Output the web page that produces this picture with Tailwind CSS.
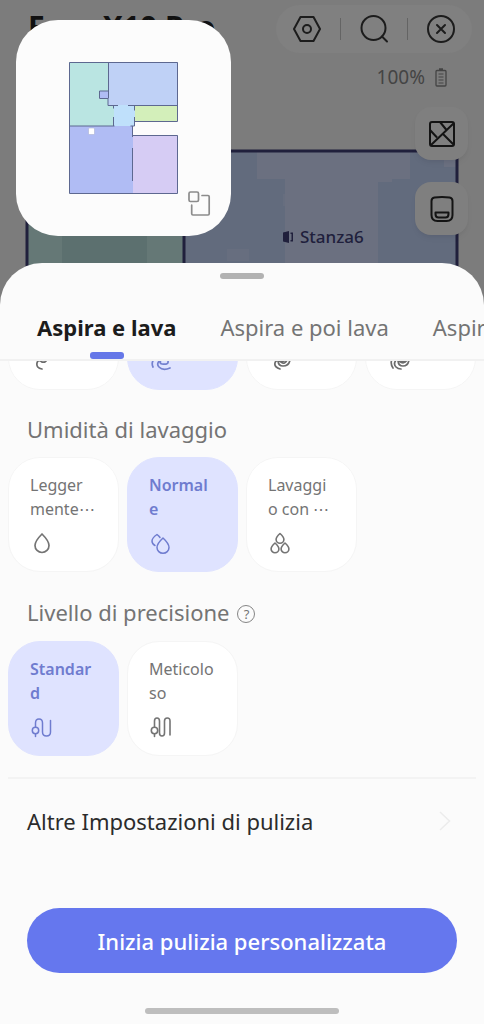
<!DOCTYPE html>
<html lang="it">
<head>
    <meta charset="UTF-8">
    <meta name="viewport" content="width=device-width, initial-scale=1.0">
    <title>Pulizia personalizzata</title>
    <script src="https://cdn.jsdelivr.net/npm/@tailwindcss/browser@4"></script>
</head>
<body class="bg-[#7c7c7c] font-['Noto_Sans',sans-serif]">
    <div class="relative min-h-screen flex flex-col overflow-hidden">

        <!-- Map behind the sheet -->
        <svg class="absolute left-0 top-0 w-full h-[310px]" viewBox="0 0 484 310" preserveAspectRatio="none" aria-hidden="true">
            <path fill="#657876" d="M27 151h156v159H27z"/>
            <path fill="#5c706f" d="M62 236h85v74H62z"/>
            <path fill="#6b7080" d="M183 151h274v159H183z"/>
            <path fill="#626b7d" d="M183 151h74v28h28v131H183zM410 151h34v16h13v143h-79V182h14v-3h18z"/>
            <path fill="#6b7080" opacity=".6" d="M227 249h22v12h-22zM283 194h5v12h-5z"/>
            <path fill="none" stroke="#20203c" stroke-width="3" d="M27 310V151h430v159M184 151v159"/>
        </svg>

        <header class="relative h-[263px] shrink-0">
            <div class="flex items-start justify-between pl-7 pr-3 pt-[5px]">
                <h1 class="whitespace-nowrap text-[30px] leading-[44px] font-bold text-[#111]">Easy X10 Pro</h1>
                <div class="flex items-center h-12 px-4 gap-[18px] rounded-full bg-[#808080] text-[#1c1c1c]">
                    <button type="button" aria-label="Impostazioni">
                        <svg class="w-[30px] h-[30px]" viewBox="0 0 30 30" fill="none" stroke="currentColor" stroke-width="2" stroke-linejoin="round">
                            <path d="M8.500 3h13L28 15l-6.500 12h-13L2 15z"/>
                            <circle cx="15" cy="15" r="4"/>
                        </svg>
                    </button>
                    <span class="w-px h-[22px] bg-[#646464]"></span>
                    <button type="button" aria-label="Cerca">
                        <svg class="w-[30px] h-[30px]" viewBox="0 0 30 30" fill="none" stroke="currentColor" stroke-width="2" stroke-linecap="round">
                            <circle cx="14.500" cy="14" r="12"/>
                            <path d="M23 22.500l5 5"/>
                        </svg>
                    </button>
                    <span class="w-px h-[22px] bg-[#646464]"></span>
                    <button type="button" aria-label="Chiudi">
                        <svg class="w-[30px] h-[30px]" viewBox="0 0 30 30" fill="none" stroke="currentColor" stroke-width="2" stroke-linecap="round">
                            <circle cx="15" cy="15" r="13"/>
                            <path d="M11 11l8 8M19 11l-8 8"/>
                        </svg>
                    </button>
                </div>
            </div>

            <div class="flex items-center justify-end gap-[10px] pt-[10px] pr-[37px] text-[#444]">
                <span class="text-[19px] leading-7">100%</span>
                <svg class="w-3 h-[19px]" viewBox="0 0 12 19" fill="none" stroke="currentColor">
                    <path stroke-width="1.300" d="M2 2.500h8q1 0 1 1V17q0 1-1 1H2q-1 0-1-1V3.500q0-1 1-1zM4 1h4"/>
                    <path stroke-width="1.200" d="M3.500 6h5M3.500 9h5M3.500 12h5M3.500 15h5"/>
                </svg>
            </div>

            <div class="flex flex-col items-end gap-[22px] pt-4 pr-4 text-[#141414]">
                <button type="button" aria-label="Modifica mappa" class="flex items-center justify-center w-[53px] h-[53px] rounded-2xl bg-[#7f7f7f] shadow-md shadow-black/5">
                    <svg class="w-[26px] h-[26px]" viewBox="0 0 26 26" fill="none" stroke="currentColor" stroke-width="2" stroke-linejoin="round">
                        <rect x="1" y="1" width="24" height="24" rx="2"/>
                        <path d="M25 2L2 24M1 9l7 7.500M11 1l6.500 8M14 13l11 11"/>
                    </svg>
                </button>
                <button type="button" aria-label="Stazione" class="flex items-center justify-center w-[53px] h-[53px] rounded-2xl bg-[#7f7f7f] shadow-md shadow-black/5">
                    <svg class="w-6 h-[26px]" viewBox="0 0 24 26" fill="none" stroke="currentColor" stroke-width="2" stroke-linejoin="round">
                        <path d="M4.500 1.500Q12 .5 19.500 1.500 22.500 2 22.500 5v14q0 6-6 6h-9q-6 0-6-6V5q0-3 3-3.500z"/>
                        <path d="M5.500 16.500h13v1.500q0 3.500-3 3.500h-7q-3 0-3-3.500z"/>
                    </svg>
                </button>
            </div>

            <!-- Room label on the map -->
            <div class="absolute left-[282px] top-[225px] flex items-center gap-[6px] text-[#20203c]">
                <svg class="w-3 h-3" viewBox="0 0 12 12" fill="currentColor">
                    <path d="M1 1.500L7 0v12l-6-1.500zM8.500 1.500H11v9H8.500V9h1V3h-1z"/>
                </svg>
                <span class="text-[17px] leading-6 font-medium">Stanza6</span>
            </div>

            <!-- Floating mini map -->
            <div class="absolute left-4 top-5 w-[215px] h-[216px] rounded-[42px] bg-[#fcfcfc]">
                <svg class="w-full h-full" viewBox="16 20 215 216" fill="none" aria-label="Mappa">
                    <path fill="#bae5e2" d="M69 62h39v29h-9v8h9v6h6v21H69z"/>
                    <path fill="#bfd1f6" d="M109 62h69v43h-70V91h1z"/>
                    <path fill="#bfe0fb" d="M114 105h21v21h-21z"/>
                    <path fill="#d3efba" d="M135 105h43v16h-43z"/>
                    <path fill="#b0bcf4" d="M69 126h64v67H69zM100 91h8v7h-8z"/>
                    <path fill="#d6ccf4" d="M133 135h45v58h-45z"/>
                    <path stroke="#5d6890" d="M69.500 62.500h108v59h-43M69.500 62.500v131h108v-58h-45M108.500 62.500V91h-9v7.500h8.500v7h10M128 105.500h49.500M108.500 91v7.500M113.500 105.500v3M113.500 117v9M69.500 126h45M134.500 105.500v5M134.500 117v9h-4M132.500 126v11M132.500 148v33"/>
                    <rect x="88.500" y="128" width="6" height="6.500" rx="1" fill="#fff" stroke="#a3a9c8" stroke-width=".5"/>
                    <g stroke="#8c8c8c" stroke-width="1.700" stroke-linejoin="round" stroke-linecap="round">
                        <rect x="189" y="192" width="9.500" height="9.500" rx="1.500"/>
                        <path d="M202 195.500h6q1.200 0 1.200 1.200v17q0 1.300-1.200 1.300h-15q-1.300 0-1.300-1.300v-8.500"/>
                    </g>
                </svg>
            </div>
        </header>

        <!-- Settings sheet -->
        <main class="relative flex-1 flex flex-col rounded-t-[42px] bg-[#fbfbfb] overflow-hidden">
            <div class="mx-auto mt-[10px] w-11 h-[6px] shrink-0 rounded-full bg-[#b2b2b2]"></div>

            <nav class="flex shrink-0 gap-11 pl-[37px] mt-[31px] border-b-2 border-[#f1f1f1] whitespace-nowrap text-[22px] leading-[34px] text-[#747474]">
                <button type="button" class="flex flex-col items-center font-bold text-[#1c1c1c]">
                    Aspira e lava
                    <span class="mt-2 w-[34px] h-[7px] rounded-[3px] bg-[#6577e8]"></span>
                </button>
                <button type="button" class="self-start">Aspira e poi lava</button>
                <button type="button" class="self-start">Aspira</button>
            </nav>

            <form class="flex-1 flex flex-col">
                <!-- Suction power, scrolled mostly out of view -->
                <div class="h-[29px] shrink-0 overflow-hidden flex flex-col justify-end px-2">
                    <div class="grid grid-cols-4 gap-2">
                        <label class="flex flex-col justify-end h-[115px] pl-[21px] pb-[17px] rounded-[32px] border border-[#f5f5f5] bg-white text-[#6c6c6c]">
                            <input type="radio" name="suction" aria-label="Silenziosa" class="sr-only">
                            <svg class="w-6 h-6" viewBox="0 0 24 24" fill="none" stroke="currentColor" stroke-width="1.700" stroke-linecap="round">
                                <path d="M17 11q-1 4-5 3M12 14q-4-3-5 1-1 5 5 6"/>
                            </svg>
                        </label>
                        <label class="flex flex-col justify-end h-[115px] pl-[21px] pb-[17px] rounded-[32px] border border-[#dfe3ff] bg-[#dfe3ff] text-[#7481cf]">
                            <input type="radio" name="suction" aria-label="Normale" class="sr-only" checked>
                            <svg class="w-6 h-6" viewBox="0 0 24 24" fill="none" stroke="currentColor" stroke-width="1.700" stroke-linecap="round">
                                <path d="M5 11q-3 4-1 8M11 12q-4 4-1 7 4 4 11 1M11 13q7-3 8 0 1 4-6 3-2 0-2-3M19 13l1-3"/>
                            </svg>
                        </label>
                        <label class="flex flex-col justify-end h-[115px] pl-[21px] pb-[17px] rounded-[32px] border border-[#f5f5f5] bg-white text-[#6c6c6c]">
                            <input type="radio" name="suction" aria-label="Forte" class="sr-only">
                            <svg class="w-6 h-6" viewBox="0 0 24 24" fill="none" stroke="currentColor" stroke-width="1.700" stroke-linecap="round">
                                <path d="M2 11l1 1M13 14q-5-3-6 1-1 4 5 6M10 12q0 6 5 6 6 0 7-6M11 12q5 3 7-1M13 14q4 3 6-2"/>
                            </svg>
                        </label>
                        <label class="flex flex-col justify-end h-[115px] pl-[21px] pb-[17px] rounded-[32px] border border-[#f5f5f5] bg-white text-[#6c6c6c]">
                            <input type="radio" name="suction" aria-label="Massima" class="sr-only">
                            <svg class="w-6 h-6" viewBox="0 0 24 24" fill="none" stroke="currentColor" stroke-width="1.700" stroke-linecap="round">
                                <path d="M5 11q-2 5 1 9M9 12q-3 4 0 7 2 2 5 2M11 12q0 6 5 6 5 0 6-6M11 12q5 4 8-1M12 13q5 4 8-1"/>
                            </svg>
                        </label>
                    </div>
                </div>

                <fieldset>
                    <legend class="px-[27px] pt-[25px] pb-[14px] text-[22px] leading-7 text-[#747474]">Umidità di lavaggio</legend>
                    <div class="grid grid-cols-4 gap-2 px-2 text-[16px] leading-6">
                        <label class="flex flex-col justify-between h-[115px] pl-[21px] pt-[15px] pb-4 rounded-[32px] border border-[#f5f5f5] bg-white text-[#747474]">
                            <input type="radio" name="water" class="sr-only">
                            <span>Legger<br>mente⋯</span>
                            <svg class="w-6 h-6" viewBox="0 0 24 24" fill="none" stroke="currentColor" stroke-width="1.700" stroke-linejoin="round">
                                <path d="M12 3q7 7 7 11.500a7 7 0 0 1-14 0Q5 10 12 3z"/>
                            </svg>
                        </label>
                        <label class="flex flex-col justify-between h-[115px] pl-[21px] pt-[15px] pb-4 rounded-[32px] border border-[#dfe3ff] bg-[#dfe3ff] text-[#6f7ccf]">
                            <input type="radio" name="water" class="sr-only" checked>
                            <span class="font-semibold">Normal<br>e</span>
                            <svg class="w-6 h-6" viewBox="0 0 24 24" fill="none" stroke="currentColor" stroke-width="1.500" stroke-linejoin="round" stroke-linecap="round">
                                <path d="M14 7Q20 12.500 20 16.500a6 5.800 0 0 1-12 0Q8 12.500 14 7z"/>
                                <path d="M6 14.500Q3 13 3 10q0-3 5-6.500 2 1.500 3 3"/>
                            </svg>
                        </label>
                        <label class="flex flex-col justify-between h-[115px] pl-[21px] pt-[15px] pb-4 rounded-[32px] border border-[#f5f5f5] bg-white text-[#747474]">
                            <input type="radio" name="water" class="sr-only">
                            <span>Lavaggi<br>o con ⋯</span>
                            <svg class="w-6 h-6" viewBox="0 0 24 24" fill="none" stroke="currentColor" stroke-width="1.600" stroke-linejoin="round">
                                <path d="M12 2.500q3.900 3.500 3.900 6a3.900 3.700 0 0 1-7.800 0Q8.100 6 12 2.500z"/>
                                <path d="M7 12q3.900 3.500 3.900 6a3.900 3.700 0 0 1-7.800 0Q3.100 15.500 7 12z"/>
                                <path d="M17 12q3.900 3.500 3.900 6a3.900 3.700 0 0 1-7.800 0Q13.100 15.500 17 12z"/>
                            </svg>
                        </label>
                    </div>
                </fieldset>

                <fieldset>
                    <legend class="flex items-center gap-2 px-[27px] pt-[26px] pb-[15px] text-[22px] leading-7 text-[#747474]">
                        Livello di precisione
                        <button type="button" aria-label="Aiuto" class="mt-1 flex items-center justify-center w-[18px] h-[18px] rounded-full border-[1px] border-[#858585] text-[13px] leading-4">?</button>
                    </legend>
                    <div class="grid grid-cols-4 gap-2 px-2 text-[16px] leading-6">
                        <label class="flex flex-col justify-between h-[115px] pl-[21px] pt-[15px] pb-4 rounded-[32px] border border-[#dfe3ff] bg-[#dfe3ff] text-[#6f7ccf]">
                            <input type="radio" name="precision" class="sr-only" checked>
                            <span class="font-semibold">Standar<br>d</span>
                            <svg class="w-6 h-6" viewBox="0 0 24 24" fill="none" stroke="currentColor" stroke-width="1.500" stroke-linecap="round">
                                <circle cx="5.500" cy="15.500" r="3.200"/>
                                <path d="M5.500 19v2.500M5.500 12V8q0-4 3.500-4t3.500 4v9q0 4 4 4t4-4V5.500"/>
                            </svg>
                        </label>
                        <label class="flex flex-col justify-between h-[115px] pl-[21px] pt-[15px] pb-4 rounded-[32px] border border-[#f5f5f5] bg-white text-[#747474]">
                            <input type="radio" name="precision" class="sr-only">
                            <span>Meticolo<br>so</span>
                            <svg class="w-6 h-6" viewBox="0 0 24 24" fill="none" stroke="currentColor" stroke-width="1.600" stroke-linecap="round">
                                <circle cx="5.500" cy="15.500" r="3.200"/>
                                <path d="M5.500 19v2.500M5.500 12V6q0-3 2.500-3t2.500 3v12q0 3 2.500 3t2.500-3V6q0-3 2.800-3t2.700 3v14"/>
                            </svg>
                        </label>
                    </div>
                </fieldset>

                <hr class="mx-2 mt-[21px] border-t-2 border-[#f3f3f3]">

                <a href="#" class="flex items-center justify-between h-[84px] pl-[27px] pr-[33px] text-[22px] leading-7 text-[#2b2b2b]">
                    Altre Impostazioni di pulizia
                    <svg class="w-3 h-5" viewBox="0 0 12 20" fill="none" stroke="#ececec" stroke-width="1.500">
                        <path d="M1 1l9.500 9L1 19"/>
                    </svg>
                </a>

                <button type="button" class="mx-[27px] mt-[45px] h-[65px] shrink-0 rounded-full bg-[#6577ee] text-[22px] leading-7 font-medium text-white">Inizia pulizia personalizzata</button>

                <div class="mx-auto mt-auto mb-[10px] w-2/5 h-[6px] shrink-0 rounded-full bg-[#bebebe]"></div>
            </form>
        </main>
    </div>
</body>
</html>
